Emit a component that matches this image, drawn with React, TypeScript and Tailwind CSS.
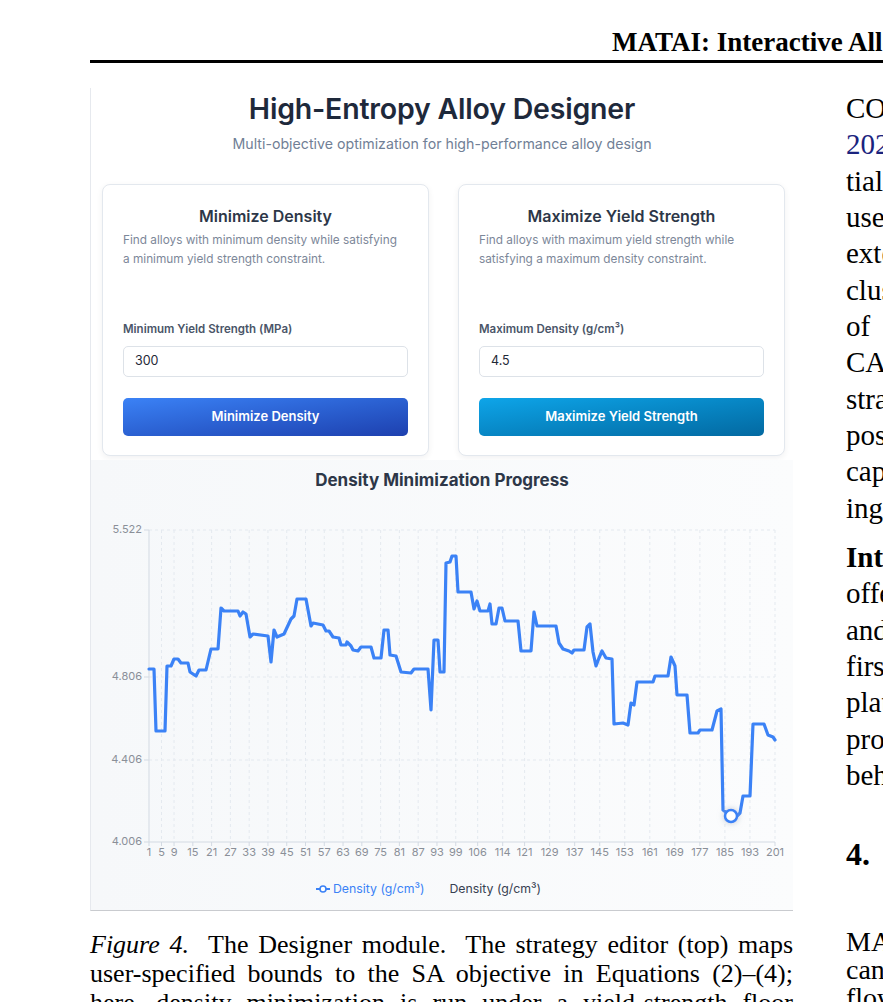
import React from "react";

const pts: [number, number][] = [
  [148, 669], [153, 669], [155, 731], [164, 731], [166, 666], [170, 666], [173, 659], [177, 659],
  [180, 663], [187, 663], [189, 672], [195, 676], [198, 670], [205, 670], [210, 649], [217, 649],
  [220, 608], [223, 611], [237, 611], [239, 616], [242, 612], [245, 614], [249, 637], [252, 634],
  [267, 636], [270, 662], [273, 630], [276, 637], [283, 634], [290, 619], [293, 616], [296, 599],
  [305, 599], [310, 626], [312, 623], [322, 625], [325, 631], [328, 631], [332, 637], [338, 638],
  [340, 645], [345, 645], [346, 642], [350, 646], [352, 650], [357, 651], [360, 647], [370, 647],
  [373, 658], [380, 658], [383, 630], [387, 630], [389, 655], [395, 656], [400, 672], [410, 673],
  [413, 669], [427, 669], [430, 710], [433, 640], [437, 640], [439, 672], [443, 672], [445, 563],
  [449, 562], [451, 556], [455, 556], [457, 592], [470, 592], [473, 609], [476, 601], [479, 611],
  [487, 611], [489, 604], [491, 624], [495, 624], [498, 608], [501, 608], [504, 621], [517, 621],
  [520, 651], [530, 651], [533, 612], [536, 626], [555, 626], [558, 643], [562, 649], [568, 651],
  [571, 653], [573, 650], [583, 650], [586, 627], [589, 624], [592, 652], [595, 666], [598, 658],
  [601, 651], [605, 658], [611, 659], [613, 724], [622, 723], [627, 725], [629, 710], [630, 703],
  [633, 705], [636, 682], [652, 682], [654, 676], [667, 676], [670, 657], [674, 666], [676, 695],
  [686, 695], [689, 733], [697, 733], [699, 730], [711, 730], [716, 711], [720, 709], [722, 810],
  [730, 816], [736, 816], [739, 813], [742, 796], [749, 796], [752, 724], [763, 724], [767, 735],
  [772, 737], [774, 740],
];

const xTicks = [1, 5, 9, 15, 21, 27, 33, 39, 45, 51, 57, 63, 69, 75, 81, 87, 93, 99, 106, 114, 121, 129, 137, 145, 153, 161, 169, 177, 185, 193, 201];
const yTicks: [string, number][] = [["5.522", 530], ["4.806", 677], ["4.406", 760], ["4.006", 842]];
const xOf = (v: number) => 148 + ((v - 1) * 626) / 200;

function Chart() {
  return (
    <svg width={703} height={370} viewBox="90 500 703 370" className="block">
      <defs>
        <filter id="glow" x="-100%" y="-100%" width="300%" height="300%">
          <feDropShadow dx="0" dy="0" stdDeviation="3" floodColor="#94a3b8" floodOpacity="0.6" />
        </filter>
      </defs>
      {yTicks.slice(0, 3).map(([, y]) => (
        <line key={y} x1={148} x2={774} y1={y} y2={y} stroke="#e4e9ef" strokeDasharray="3 3" />
      ))}
      {xTicks.slice(1).map((v) => (
        <line key={v} x1={xOf(v)} x2={xOf(v)} y1={530} y2={842} stroke="#e4e9ef" strokeDasharray="3 3" />
      ))}
      <line x1={148} y1={530} x2={148} y2={842} stroke="#d3dae3" />
      <line x1={148} y1={842} x2={774} y2={842} stroke="#d3dae3" />
      {yTicks.map(([t, y]) => (
        <g key={t}>
          <line x1={143} x2={148} y1={y} y2={y} stroke="#d3dae3" />
          <text x={141} y={y} textAnchor="end" dominantBaseline="middle" fontSize={11} fill="#8a8f98" fontFamily="Inter, sans-serif">
            {t}
          </text>
        </g>
      ))}
      {xTicks.map((v) => (
        <g key={v}>
          <line x1={xOf(v)} x2={xOf(v)} y1={842} y2={846} stroke="#d3dae3" />
          <text x={xOf(v)} y={853} textAnchor="middle" dominantBaseline="middle" fontSize={11} fill="#8a8f98" fontFamily="Inter, sans-serif">
            {v}
          </text>
        </g>
      ))}
      <polyline
        points={pts.map((p) => p.join(",")).join(" ")}
        fill="none"
        stroke="#3b82f6"
        strokeWidth={3.2}
        strokeLinejoin="round"
        strokeLinecap="round"
      />
      <circle cx={730} cy={816} r={6} fill="#ffffff" stroke="#3b82f6" strokeWidth={2.5} filter="url(#glow)" />
    </svg>
  );
}

function Card({
  title,
  desc,
  label,
  value,
  button,
  grad,
}: {
  title: string;
  desc: string[];
  label: string;
  value: string;
  button: string;
  grad: string;
}) {
  return (
    <div className="w-[327px] h-[272px] bg-white rounded-lg border border-[#e3e8ee] shadow-[0_2px_6px_rgba(15,23,42,0.06)] px-[20px] pt-[19px]">
      <div className="text-center text-[16px] leading-[24px] font-semibold text-[#2d3748]">{title}</div>
      <div className="mt-[3px] text-[11.8px] leading-[19px] text-[#7c8799] h-[90px]">
        {desc.map((d) => (
          <div key={d}>{d}</div>
        ))}
      </div>
      <div className="text-[11.5px] leading-[16px] font-semibold text-[#4a5568]">{label}</div>
      <div className="mt-[9px] h-[31px] rounded-[5px] border border-[#dde2e8] bg-white flex items-center px-[11px] text-[12.5px] text-[#1f2937]">
        {value}
      </div>
      <div className={`mt-[21px] h-[38px] rounded-[5px] flex items-center justify-center text-white text-[13px] font-semibold ${grad}`}>
        {button}
      </div>
    </div>
  );
}

const serif = "font-['Liberation_Serif','Times_New_Roman',serif]";

export default function App() {
  const p1: React.ReactNode[] = [
    "COBYLA-style constrained search (Powell,",
    <><span className="text-[#1a237e]">2023)</span> and adopts a sequen-</>,
    "tial optimization scheme that lets",
    "users explore the composition space",
    "extensively. The candidate space in-",
    "clusters a broad range of elements",
    <>of<span className="ml-[60px]">interest, while the SA schedule</span></>,
    "CAN be tuned by the user. The",
    "strategy editor exposes the com-",
    "posite objectives and constraint",
    "capabilities required for design-",
    "ing     new alloys.",
  ];
  const p2: React.ReactNode[] = [
    <><span className="font-bold">Interpretability.</span> The module</>,
    "offers visual progress tracking",
    "and design summaries. The",
    "first panel shows how the",
    "platform balances density and",
    "property targets, while the",
    "behavior of the optimizer is",
  ];
  return (
    <div className="w-[883px] h-[1002px] overflow-hidden bg-white">
      <div className="w-[1300px] pl-[90px]">
        <div className="h-[60px] pl-[522px] pt-[26px]">
          <div className={`${serif} text-[27px] leading-[32px] font-bold text-black whitespace-nowrap`}>
            MATAI: Interactive Alloy Design with Machine Learning
          </div>
        </div>
        <div className="h-[3px] bg-black w-[1100px]" />
        <div className="flex">
          {/* left column */}
          <div className="w-[703px] shrink-0 pt-[25px]">
            <div className="w-[703px] h-[823px] border-l border-b border-l-[#e6e9ee] border-b-[#c9cbcf] bg-white font-['Inter',sans-serif] flex flex-col">
              <div className="h-[96px] pt-[3px] text-center">
                <div className="text-[28.5px] leading-[35px] font-semibold text-[#1e293b] tracking-[-0.2px]">High-Entropy Alloy Designer</div>
                <div className="mt-[8px] text-[14.2px] leading-[20px] text-[#718096]">
                  Multi-objective optimization for high-performance alloy design
                </div>
              </div>
              <div className="flex gap-[29px] pl-[11px]">
                <Card
                  title="Minimize Density"
                  desc={["Find alloys with minimum density while satisfying", "a minimum yield strength constraint."]}
                  label="Minimum Yield Strength (MPa)"
                  value="300"
                  button="Minimize Density"
                  grad="bg-gradient-to-br from-[#3b82f6] to-[#1e40af]"
                />
                <Card
                  title="Maximize Yield Strength"
                  desc={["Find alloys with maximum yield strength while", "satisfying a maximum density constraint."]}
                  label="Maximum Density (g/cm³)"
                  value="4.5"
                  button="Maximize Yield Strength"
                  grad="bg-gradient-to-br from-[#0ea5e9] to-[#0369a1]"
                />
              </div>
              <div className="mt-[4px] flex-1 bg-gradient-to-r from-[#f6f8fa] to-[#fbfcfd]">
                <div className="pt-[8px] text-center text-[17px] leading-[24px] font-bold text-[#2d3748]">
                  Density Minimization Progress
                </div>
                <div className="mt-[8px]">
                  <Chart />
                </div>
                <div className="mt-[11px] flex items-center text-[12px] leading-[16px] pl-[225px]">
                  <svg width="14" height="10" viewBox="0 0 14 10" className="mr-[3px]">
                    <line x1="0" y1="5" x2="14" y2="5" stroke="#3b82f6" strokeWidth="2" />
                    <circle cx="7" cy="5" r="3" fill="#ffffff" stroke="#3b82f6" strokeWidth="1.6" />
                  </svg>
                  <span className="text-[#3b82f6] text-[12.3px]">Density (g/cm³)</span>
                  <span className="ml-[25px] text-[#374151] text-[12.3px]">Density (g/cm³)</span>
                </div>
              </div>
            </div>
            <div className={`${serif} mt-[19px] text-[26px] leading-[29px] text-black`}>
              <div className="[text-align-last:justify] text-justify whitespace-nowrap">
                <i>Figure 4.</i>&nbsp; The Designer module.&nbsp; The strategy editor (top) maps
              </div>
              <div className="[text-align-last:justify] text-justify whitespace-nowrap">
                user-specified bounds to the SA objective in Equations (2)–(4);
              </div>
              <div className="[text-align-last:justify] text-justify whitespace-nowrap">
                here, density minimization is run under a yield-strength floor
              </div>
            </div>
          </div>
          {/* right column */}
          <div className={`ml-[53px] w-[400px] shrink-0 ${serif} text-[29px] text-black whitespace-pre`}>
            <div className="pt-[26.8px] leading-[36.36px]">
              {p1.map((l, i) => (
                <div key={i}>{l}</div>
              ))}
            </div>
            <div className="mt-[12.7px] leading-[36.36px]">
              {p2.map((l, i) => (
                <div key={i}>{l}</div>
              ))}
            </div>
            <div className="mt-[41px] text-[32px] leading-[40px] font-bold">4.   Case Studies</div>
            <div className="mt-[54px] text-[28px] leading-[28px]">
              <div>MATAI supports several</div>
              <div>canonical design work-</div>
              <div>flows, which we illustrate</div>
            </div>
          </div>
        </div>
      </div>
    </div>
  );
}
